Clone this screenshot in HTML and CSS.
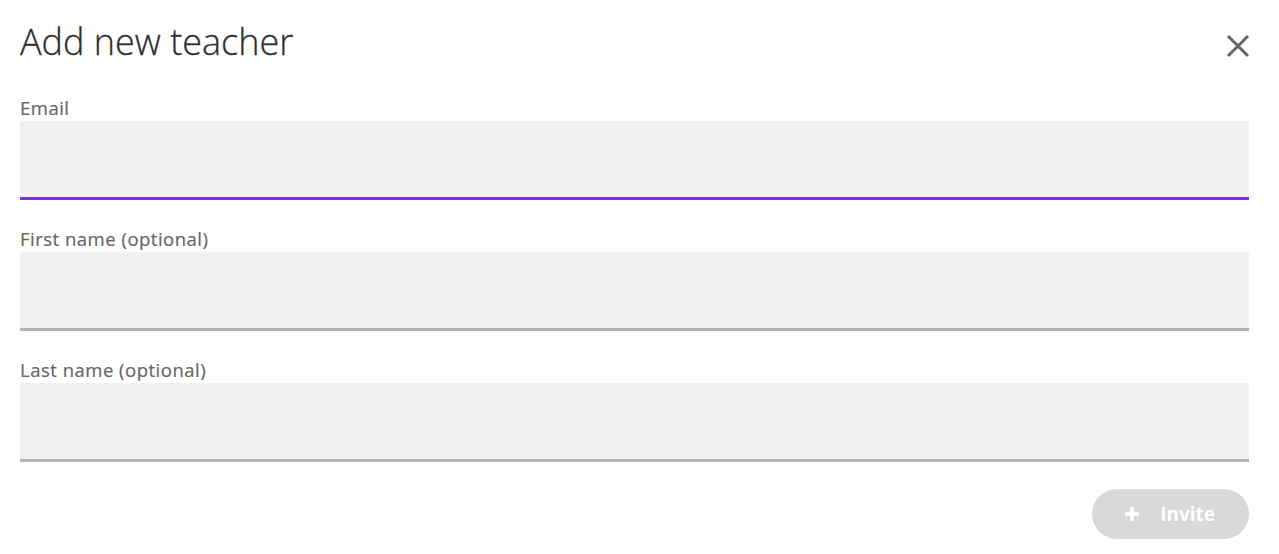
FILE: index.html
```html
<!DOCTYPE html>
<html lang="en">
<head>
    <meta charset="UTF-8">
    <title>Add new teacher</title>
    <link rel="stylesheet" href="styles.css">
</head>
<body>
    <div class="dialog">
        <div class="dialog-header">
            <h1>Add new teacher</h1>
            <button class="close" aria-label="Close">
                <svg width="24" height="24" viewBox="0 0 24 24"><path d="M2 2L22 22M22 2L2 22" stroke="#666" stroke-width="3" fill="none"/></svg>
            </button>
        </div>

        <div class="field">
            <label for="email">Email</label>
            <input type="text" id="email" class="active">
        </div>
        <div class="field">
            <label for="first">First name (optional)</label>
            <input type="text" id="first">
        </div>
        <div class="field">
            <label for="last">Last name (optional)</label>
            <input type="text" id="last">
        </div>

        <div class="actions">
            <button class="invite" disabled>
                <svg width="16" height="16" viewBox="0 0 16 16"><path d="M8 1V15M1 8H15" stroke="#fff" stroke-width="3.4" fill="none"/></svg>
                Invite
            </button>
        </div>
    </div>
</body>
</html>
```

FILE: styles.css
```css
body {
    margin: 0;
    font-family: 'Open Sans', 'Lato', sans-serif;
    background: #fff;
    color: #333;
}
.dialog {
    padding: 20px 30px 0 20px;
}
.dialog-header {
    display: flex;
    justify-content: space-between;
    align-items: flex-start;
    height: 77px;
}
h1 {
    margin: 0;
    font-weight: 300;
    font-size: 36px;
    line-height: 44px;
    color: #2e2e2e;
    -webkit-text-stroke: 0.3px #2e2e2e;
}
.close {
    margin-top: 14px;
    margin-right: -1px;
    padding: 0;
    border: none;
    background: none;
    cursor: pointer;
}
.field {
    display: flex;
    flex-direction: column;
    margin-bottom: 28px;
}
.field label {
    font-size: 18.5px;
    font-weight: 500;
    letter-spacing: 0.5px;
    line-height: 22px;
    padding-bottom: 2px;
    color: #666;
    -webkit-text-stroke: 0.2px #666;
}
.field input {
    box-sizing: border-box;
    height: 79px;
    border: none;
    border-bottom: 3px solid #b3b3b3;
    background: #f1f1f1;
    outline: none;
}
.field input.active {
    border-bottom-color: #7d2fd9;
}
.actions {
    display: flex;
    justify-content: flex-end;
    margin-top: -1px;
}
.invite {
    display: flex;
    align-items: center;
    gap: 20px;
    height: 50px;
    padding: 0 34px 0 32px;
    border: none;
    border-radius: 25px;
    background: #d9d9d9;
    color: #fff;
    font-family: inherit;
    font-size: 19px;
    font-weight: 700;
}
```
